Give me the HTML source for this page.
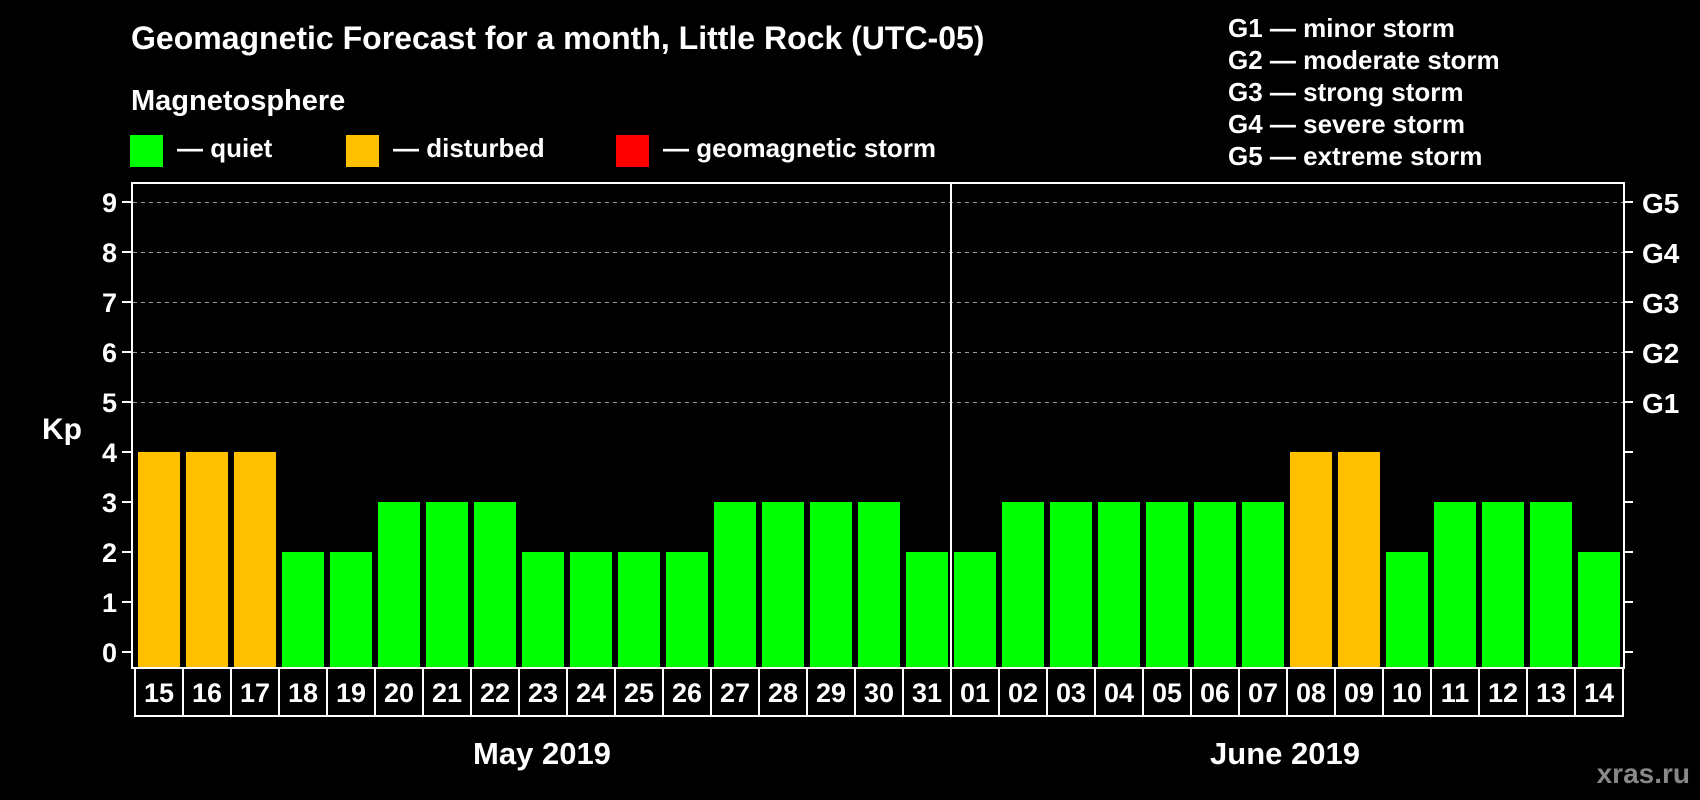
<!DOCTYPE html>
<html><head><meta charset="utf-8"><style>
html,body{margin:0;padding:0;background:#000;}
svg{display:block;}
text{font-family:"Liberation Sans",Arial,sans-serif;font-weight:bold;fill:#fff;}
</style></head><body>
<svg width="1700" height="800" viewBox="0 0 1700 800" xmlns="http://www.w3.org/2000/svg">
<rect width="1700" height="800" fill="#000"/>
<text x="131" y="49" font-size="32">Geomagnetic Forecast for a month, Little Rock (UTC-05)</text>
<text x="131" y="110" font-size="29">Magnetosphere</text>
<rect x="130" y="135" width="33" height="32" fill="#00ff00"/>
<text x="177" y="157" font-size="26">— quiet</text>
<rect x="346" y="135" width="33" height="32" fill="#ffc000"/>
<text x="393" y="157" font-size="26">— disturbed</text>
<rect x="616" y="135" width="33" height="32" fill="#ff0000"/>
<text x="663" y="157" font-size="26">— geomagnetic storm</text>
<g font-size="26">
<text x="1228" y="37">G1 — minor storm</text>
<text x="1228" y="69">G2 — moderate storm</text>
<text x="1228" y="101">G3 — strong storm</text>
<text x="1228" y="133">G4 — severe storm</text>
<text x="1228" y="165">G5 — extreme storm</text>
</g>
<g stroke="#999" stroke-width="1" stroke-dasharray="4,4">
<line x1="133" y1="202.5" x2="1624" y2="202.5"/>
<line x1="133" y1="252.5" x2="1624" y2="252.5"/>
<line x1="133" y1="302.5" x2="1624" y2="302.5"/>
<line x1="133" y1="352.5" x2="1624" y2="352.5"/>
<line x1="133" y1="402.5" x2="1624" y2="402.5"/>
</g>
<g id="bars"></g>
<rect x="132" y="183" width="1492" height="485" fill="none" stroke="#fff" stroke-width="2"/>
<line x1="951" y1="183" x2="951" y2="668" stroke="#fff" stroke-width="2"/>
<g stroke="#fff" stroke-width="2" id="ticks"></g>
<g font-size="27" text-anchor="end" id="ylab"></g>
<text x="42" y="439" font-size="30">Kp</text>
<g font-size="28">
<text x="1642" y="213">G5</text>
<text x="1642" y="263">G4</text>
<text x="1642" y="313">G3</text>
<text x="1642" y="363">G2</text>
<text x="1642" y="413">G1</text>
</g>
<g id="dates" font-size="27" text-anchor="middle"></g>
<text x="542" y="764" font-size="31" text-anchor="middle">May 2019</text>
<text x="1285" y="764" font-size="31" text-anchor="middle">June 2019</text>
<text x="1690" y="783" font-size="28" text-anchor="end" style="fill:#888">xras.ru</text>
</svg>
<script>
(function(){
var ns="http://www.w3.org/2000/svg";
function el(p,t,a,txt){var e=document.createElementNS(ns,t);for(var k in a)e.setAttribute(k,a[k]);if(txt!=null)e.textContent=txt;document.getElementById(p).appendChild(e);}
var vals=[4,4,4,2,2,3,3,3,2,2,2,2,3,3,3,3,2,2,3,3,3,3,3,3,4,4,2,3,3,3,2];
var labs=["15","16","17","18","19","20","21","22","23","24","25","26","27","28","29","30","31","01","02","03","04","05","06","07","08","09","10","11","12","13","14"];
for(var i=0;i<31;i++){var x=138+i*48;var ty=652-vals[i]*50;
el("bars","rect",{x:x,y:ty,width:42,height:668-ty,fill:vals[i]>=4?"#ffc000":"#00ff00"});
el("dates","rect",{x:135+i*48,y:668,width:48,height:48,fill:"none",stroke:"#fff","stroke-width":2});
el("dates","text",{x:159+i*48,y:702},labs[i]);}
for(var k=0;k<=9;k++){var y=652-k*50;
el("ticks","line",{x1:122,y1:y,x2:132,y2:y});
el("ticks","line",{x1:1624,y1:y,x2:1633,y2:y});
el("ylab","text",{x:117,y:y+10},String(k));}
})();
</script>
</body></html>
